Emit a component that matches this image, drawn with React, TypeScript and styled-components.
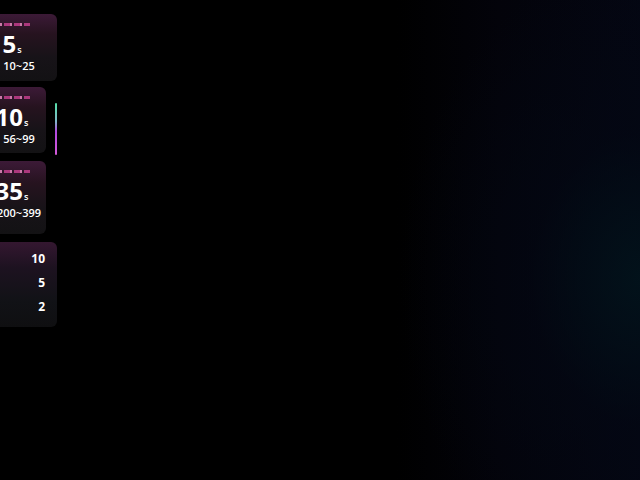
import styled, { createGlobalStyle } from "styled-components";

const Global = createGlobalStyle`
  html, body {
    margin: 0;
    padding: 0;
    background: #000;
  }
  body {
    font-family: "Open Sans", "Noto Sans", "DejaVu Sans", sans-serif;
    color: #fff;
  }
`;

const Page = styled.div`
  width: 640px;
  height: 480px;
  overflow: hidden;
  background:
    radial-gradient(ellipse 240px 320px at 100% 58%, rgba(2, 20, 28, 0.85) 0%, rgba(3, 8, 20, 0.55) 45%, rgba(0, 0, 0, 0) 100%),
    linear-gradient(90deg, #000 0%, #000 62%, #03030a 78%, #040612 100%);
  display: flex;
`;

const Rail = styled.div`
  display: flex;
  flex-direction: column;
  gap: 6px;
  padding-top: 14px;
  margin-left: -26px;
`;

const TierRow = styled.div`
  display: flex;
  align-items: flex-start;
  gap: 9px;
`;

const Card = styled.div<{ $wide?: boolean; $tall: number }>`
  width: ${(p) => (p.$wide ? 83 : 72)}px;
  height: ${(p) => p.$tall}px;
  border-radius: 0 6px 6px 0;
  background: linear-gradient(180deg, #3c1a37 0%, #26131f 30%, #171318 65%, #131214 100%);
  box-shadow: 0 1px 2px rgba(0, 0, 0, 0.6);
  padding: 9px 0 0 26px;
  box-sizing: border-box;
`;

const Content = styled.div`
  width: 38px;
  display: flex;
  flex-direction: column;
  align-items: center;
`;

const Dashes = styled.div`
  align-self: stretch;
  width: 56px;
  height: 3px;
  margin-left: -26px;
  background: repeating-linear-gradient(90deg, #c23e8c 0 6px, #e58abf 6px 8px, transparent 8px 10px);
  opacity: 0.85;
`;

const Seconds = styled.div`
  margin-top: 6px;
  margin-right: 14px;
  font-size: 24px;
  font-weight: 700;
  line-height: 24px;
  white-space: nowrap;
  & > small {
    font-size: 9px;
    font-weight: 600;
    line-height: 0;
    margin-left: 1px;
  }
`;

const Range = styled.div`
  margin-top: 3px;
  margin-left: 0;
  font-size: 11px;
  font-weight: 600;
  line-height: 14px;
  white-space: nowrap;
`;

const Meter = styled.div`
  width: 2px;
  height: 52px;
  margin-top: 16px;
  border-radius: 1px;
  background: linear-gradient(180deg, #55e0a8 0%, #7fb8c8 35%, #b248e0 55%, #d45ad8 100%);
`;

const Stats = styled.div`
  width: 83px;
  height: 85px;
  margin-top: 2px;
  border-radius: 0 6px 6px 0;
  background: linear-gradient(180deg, #341730 0%, #1d1220 30%, #111216 70%, #0f0f11 100%);
  display: flex;
  flex-direction: column;
  align-items: flex-end;
  padding: 9px 12px 0 0;
  box-sizing: border-box;
  gap: 8px;
`;

const StatValue = styled.div`
  font-size: 12px;
  font-weight: 700;
  line-height: 16px;
`;

const tiers = [
  { sec: 5, range: "10~25", wide: true, meter: false, h: 67 },
  { sec: 10, range: "56~99", wide: false, meter: true, h: 66 },
  { sec: 35, range: "200~399", wide: false, meter: false, h: 73 },
];

export default function App() {
  return (
    <Page>
      <Global />
      <Rail>
        {tiers.map((t) => (
          <TierRow key={t.sec}>
            <Card $wide={t.wide} $tall={t.h}>
              <Content>
                <Dashes />
                <Seconds>
                  {t.sec}
                  <small>s</small>
                </Seconds>
                <Range>{t.range}</Range>
              </Content>
            </Card>
            {t.meter && <Meter />}
          </TierRow>
        ))}
        <Stats>
          {[10, 5, 2].map((v) => (
            <StatValue key={v}>{v}</StatValue>
          ))}
        </Stats>
      </Rail>
    </Page>
  );
}
